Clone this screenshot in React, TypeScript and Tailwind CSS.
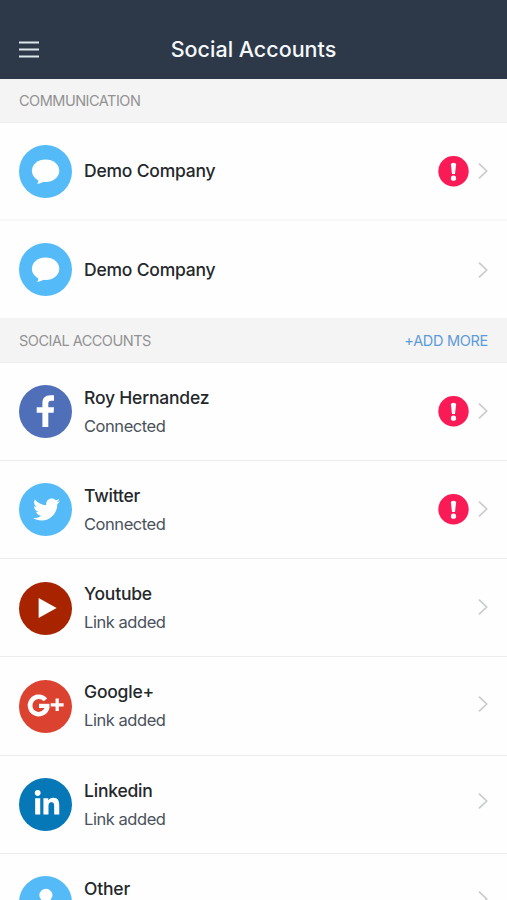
import type { ReactNode } from "react";
import { FaTwitter, FaLinkedinIn } from "react-icons/fa";

function ChatIcon() {
  return (
    <svg viewBox="0 0 53 53" className="size-full" fill="white">
      <ellipse cx="26.6" cy="25.7" rx="13.7" ry="11.3" />
      <path d="M18.8 33C19.8 35.5 19.4 37.2 18 38.8C21.5 38.6 23.8 37.5 25.4 35.8Z" />
    </svg>
  );
}

function FacebookIcon() {
  return (
    <svg viewBox="0 0 53 53" className="size-full" fill="white">
      <path d="M23.4 42.1V27.7H17.7V22.2H23.4V18.1C23.4 12.9 26.4 10.2 31.2 10.2H35V15.7H32.4C30.1 15.7 29.3 16.7 29.3 18.7V22.2H35L34.6 27.7H29.3V42.1Z" />
    </svg>
  );
}

function PlayIcon() {
  return (
    <svg viewBox="0 0 53 53" className="size-full" fill="white">
      <path d="M19.6 16.1L37.6 25.9L19.6 35.9Z" />
    </svg>
  );
}

function GooglePlusIcon() {
  return (
    <svg viewBox="0 0 53 53" className="size-full" fill="none" stroke="white">
      <path d="M26.4 19.9A8.7 8.7 0 1 0 28.3 26.9" strokeWidth="4.6" />
      <path d="M20 25.9H30.4" strokeWidth="4.2" />
      <path d="M31.7 24.8H44.6M38.2 18.5V31.1" strokeWidth="3.3" />
    </svg>
  );
}

function PersonIcon() {
  return (
    <svg viewBox="0 0 53 53" className="size-full" fill="white">
      <path d="M26.9 12.7A6.6 6.6 0 0 1 33.5 19.3C33.5 22 30.8 23.5 30.3 27.4H23.5C23 23.5 20.3 22 20.3 19.3A6.6 6.6 0 0 1 26.9 12.7ZM14 38C14 31 19 29 26.9 29C34 29 39 31 39 38Z" />
    </svg>
  );
}

type Account = {
  name: string;
  status?: string;
  color: string;
  icon: ReactNode;
  alert?: boolean;
  arrow?: string;
};

const communication: Account[] = [
  { name: "Demo Company", color: "bg-[#55bbf8]", icon: <ChatIcon />, alert: true },
  { name: "Demo Company", color: "bg-[#55bbf8]", icon: <ChatIcon /> },
];

const social: Account[] = [
  { name: "Roy Hernandez", status: "Connected", color: "bg-[#4f70b9]", icon: <FacebookIcon />, alert: true, arrow: "pb-px" },
  { name: "Twitter", status: "Connected", color: "bg-[#55bbf8]", icon: <FaTwitter size={27} className="ml-[2px]" />, alert: true, arrow: "pb-px" },
  { name: "Youtube", status: "Link added", color: "bg-[#a82400]", icon: <PlayIcon />, arrow: "pb-[3px]" },
  { name: "Google+", status: "Link added", color: "bg-[#dc4230]", icon: <GooglePlusIcon />, arrow: "pb-[5px]" },
  { name: "Linkedin", status: "Link added", color: "bg-[#0677b7]", icon: <FaLinkedinIn size={28} className="mb-px ml-[3px]" />, arrow: "pb-[7px]" },
  { name: "Other", status: "", color: "bg-[#55bbf8]", icon: <PersonIcon />, arrow: "pb-[8px]" },
];

function AccountRow({ name, status, color, icon, alert, arrow = "" }: Account) {
  const divider = status === undefined ? "border-b-2 border-[#f7f7f8] last:border-b last:border-[#f4f4f4]" : "border-b border-[#ececee]";
  return (
    <li className={`flex h-[98.25px] items-center pt-px pr-[19px] pl-[19px] ${divider}`}>
      <div className={`flex size-[53px] shrink-0 items-center justify-center rounded-full text-white ${color}`}>
        {icon}
      </div>
      <div className="ml-3 flex-1 whitespace-nowrap">
        <div className="text-[17.5px] leading-7 font-medium tracking-[-0.2px] text-[#24282b]">{name}</div>
        {status !== undefined && (
          <div className="h-7 text-[16.5px] leading-7 tracking-[-0.45px] text-[#4a525c]">{status}</div>
        )}
      </div>
      {alert && (
        <svg viewBox="0 0 31 31" className="mr-[9px] size-[31px]">
          <circle cx="15.5" cy="15.2" r="15.2" fill="#fa1b56" />
          <path d="M12.9 8.4Q13 6.7 15.5 6.7Q18 6.7 18.1 8.4L17 18.1H14Z" fill="white" />
          <circle cx="15.5" cy="22.2" r="2.6" fill="white" />
        </svg>
      )}
      <div className={arrow}>
        <svg viewBox="0 0 10 18" className="h-[18px] w-[10px]" fill="none" stroke="#c9cbcc" strokeWidth="1.7">
          <path d="M1 1.6L8.7 9L1 16.4" />
        </svg>
      </div>
    </li>
  );
}

function SectionHeader({ title, action }: { title: string; action?: string }) {
  return (
    <div className="flex h-[43.5px] items-center justify-between border-b border-[#eeeeef] bg-[#f4f4f4] px-[19px] pt-[2px] text-[14.5px] tracking-[-0.5px] text-[#929292]">
      <h2>{title}</h2>
      {action && <button className="tracking-[-0.3px] text-[#5c9bd9]">{action}</button>}
    </div>
  );
}

export default function App() {
  return (
    <div className="h-[900px] w-[507px] overflow-hidden bg-[#fefefe] font-['Inter','Liberation_Sans',sans-serif]">
      <header className="grid h-[79px] grid-cols-[1fr_auto_1fr] items-center bg-[#2d3949] pt-5 pl-[19px]">
        <svg viewBox="0 0 20 17" className="h-[17px] w-5" stroke="#dce5ea" strokeWidth="1.8">
          <path d="M0 1.5H20M0 8.5H20M0 15.5H20" />
        </svg>
        <h1 className="pr-[19px] text-[21.5px] font-medium text-[#f5f8fa]">Social Accounts</h1>
      </header>
      <SectionHeader title="COMMUNICATION" />
      <ul>
        {communication.map((account, i) => <AccountRow key={i} {...account} />)}
      </ul>
      <SectionHeader title="SOCIAL ACCOUNTS" action="+ADD MORE" />
      <ul>
        {social.map((account) => <AccountRow key={account.name} {...account} />)}
      </ul>
    </div>
  );
}
